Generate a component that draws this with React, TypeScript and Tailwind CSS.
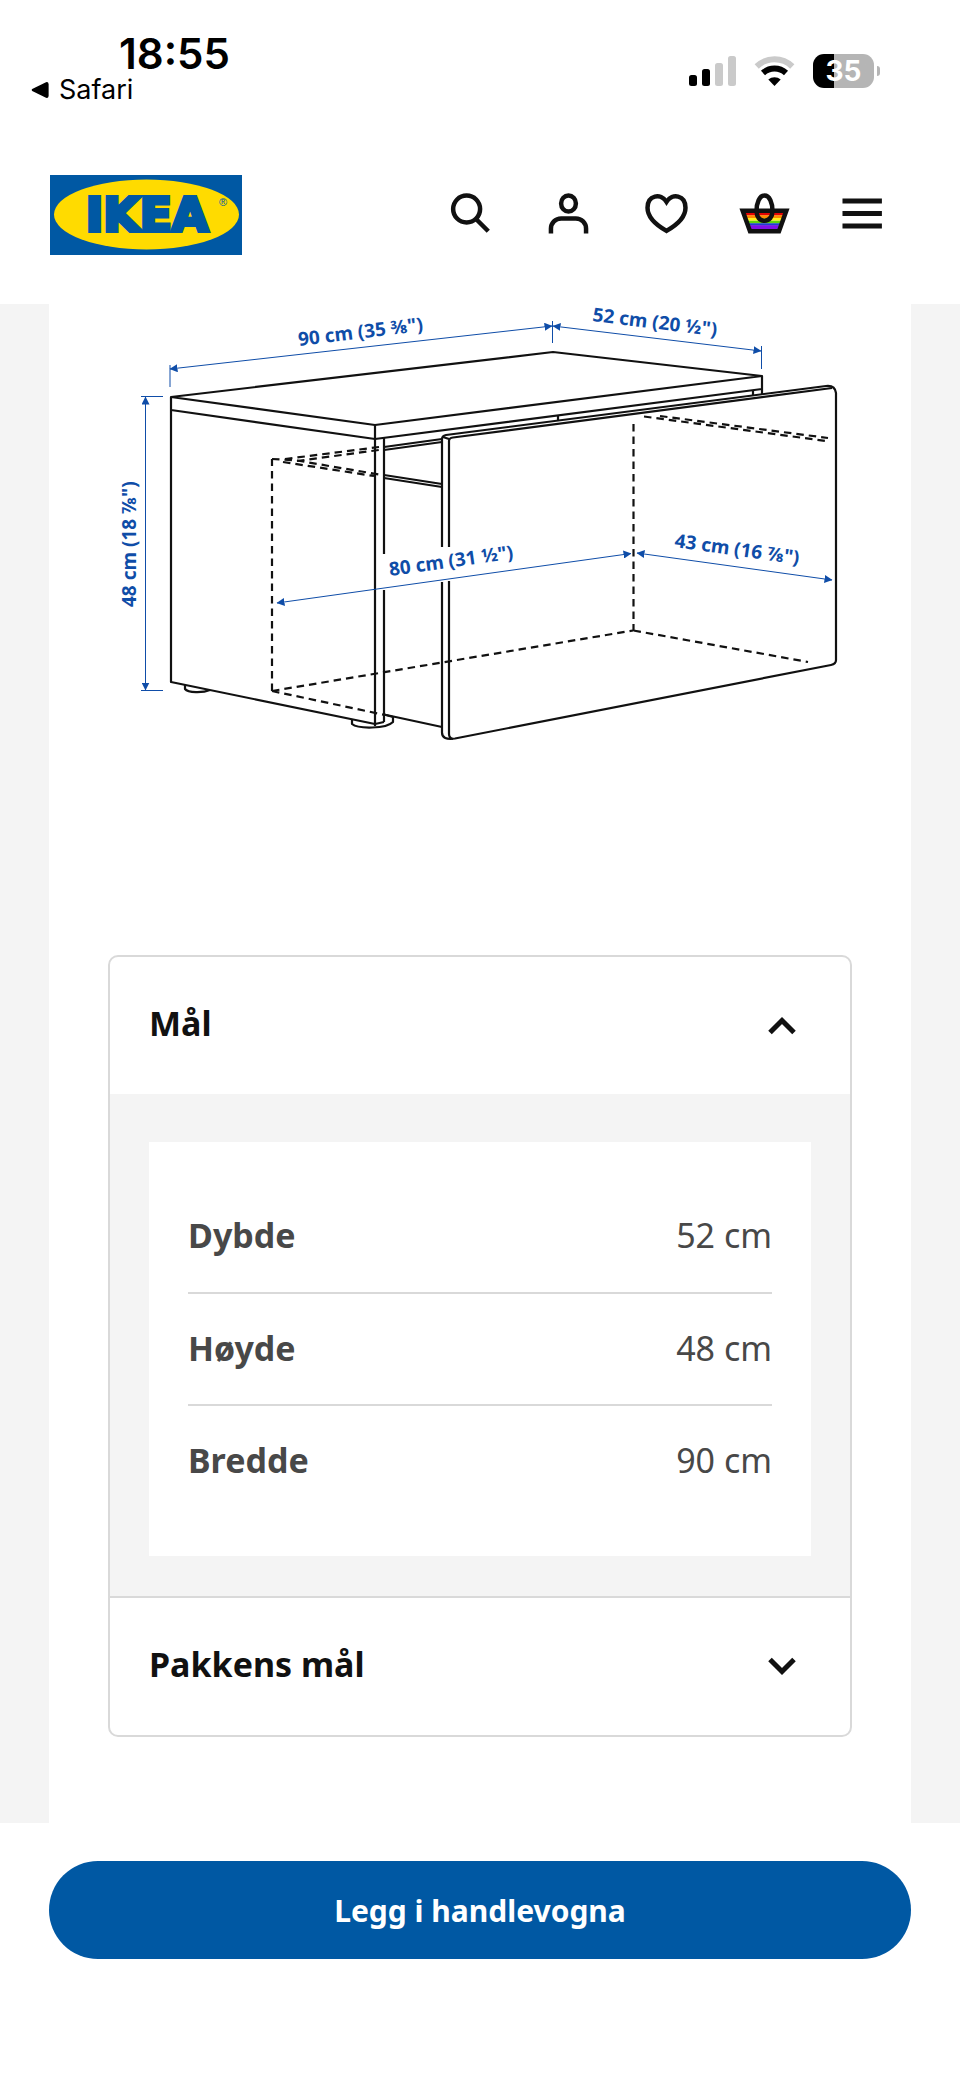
import { useState, type ReactNode } from 'react';

const INK = '#111111';
const BLUE = '#0f4da8';

const measurements = [
  { label: 'Dybde', value: '52 cm' },
  { label: 'Høyde', value: '48 cm' },
  { label: 'Bredde', value: '90 cm' },
];

function StatusBar() {
  return (
    <div className="flex h-[126px] items-start justify-between pl-[31px] pr-20 font-['Inter',sans-serif] text-black">
      <div className="pt-[34px]">
        <div className="pl-[88px] text-[42px] leading-10 font-semibold">18:55</div>
        <a href="#" className="flex items-center gap-2.5 text-[27px] leading-8">
          <svg className="h-[18px] w-[18px]" viewBox="0 0 18 18" aria-hidden="true">
            <path d="M1.2 8 15 1.2Q17.4 .6 17.6 3V15q-.2 2.4-2.6 1.8L1.2 10Q0 9 1.2 8z" />
          </svg>
          Safari
        </a>
      </div>
      <div className="flex items-center pt-[54px]">
        <svg className="mr-[18px] h-[34px] w-[47px]" viewBox="0 0 47 34" aria-label="Signal">
          <rect x="0" y="21" width="8" height="11" rx="2.5" />
          <rect x="13" y="15" width="8" height="17" rx="2.5" />
          <rect x="26" y="9" width="8" height="23" rx="2.5" fill="#cacaca" />
          <rect x="39" y="2" width="8" height="30" rx="2.5" fill="#cacaca" />
        </svg>
        <svg className="mr-[18px] h-[34px] w-[41px]" viewBox="0 0 41 34" fill="none" aria-label="Wi-Fi">
          <path d="M2.7 12.5a25.5 25.5 0 0 1 35.6 0" stroke="#cacaca" strokeWidth="6" />
          <path d="M9 19a17 17 0 0 1 23 0" stroke="#000" strokeWidth="6" />
          <path d="M14.3 25.5a9.5 9.5 0 0 1 12.4 0L20.5 32z" fill="#000" />
        </svg>
        <div className="flex items-center gap-[3px]">
          <div className="flex h-[34px] w-[61px] items-center justify-center rounded-[11px] bg-linear-to-r from-black from-35% to-[#b5b5b5] to-35% text-[28px] leading-none font-bold text-white">
            35
          </div>
          <div className="h-[10px] w-[3px] rounded-r-full bg-[#b5b5b5]" />
        </div>
      </div>
    </div>
  );
}

function Logo() {
  return (
    <svg className="block h-20 w-48" viewBox="0 0 192 80" aria-hidden="true">
      <rect width="192" height="80" fill="#0058a3" />
      <ellipse cx="96.500" cy="39.500" rx="92.500" ry="35" fill="#ffdb00" />
      <text
        x="97"
        y="56"
        textAnchor="middle"
        fontFamily="DejaVu Sans, sans-serif"
        fontSize="47"
        fontWeight="700"
        fill="#0058a3"
        stroke="#0058a3"
        strokeWidth="4"
      >
        IKEA
      </text>
      <text x="173" y="31" textAnchor="middle" fontFamily="Liberation Sans, sans-serif" fontSize="11" fill="#0058a3">
        ®
      </text>
    </svg>
  );
}

function NavIcon({ label, children }: { label: string; children: ReactNode }) {
  return (
    <button type="button" aria-label={label}>
      <svg className="block h-[49px] w-[49px] overflow-visible" viewBox="0 0 24 24" fill="none" stroke={INK} strokeWidth="2.200">
        {children}
      </svg>
    </button>
  );
}

function Header() {
  return (
    <header className="bg-white">
      <StatusBar />
      <nav className="flex h-[178px] items-center justify-between pl-[50px] pr-[73px]">
        <a href="#" aria-label="IKEA">
          <Logo />
        </a>
        <div className="flex items-center gap-[49px] pb-[3px]">
          <NavIcon label="Søk">
            <circle cx="10.100" cy="9.800" r="6.600" />
            <path d="m14.700 14.700 6 6" />
          </NavIcon>
          <NavIcon label="Profil">
            <rect x="8.400" y="3.200" width="7.200" height="7.800" rx="3.600" ry="3.800" />
            <path d="M3.400 21.800v-2.400a5 5 0 0 1 5-5h7.200a5 5 0 0 1 5 5v2.400" />
          </NavIcon>
          <NavIcon label="Favoritter">
            <path d="M12 6.300C9.200 1.800 2.700 3 2.700 9.200c0 5.100 5.200 9 9.300 11.300 4.100-2.300 9.300-6.200 9.300-11.300C21.300 3 14.800 1.800 12 6.300z" />
          </NavIcon>
          <NavIcon label="Handlevogn">
            <g stroke="none">
              <path d="M2.200 11.200h19.600v1.800H2.200z" fill="#e40303" />
              <path d="M3 12.800h18v1.500H3z" fill="#ff8c00" />
              <path d="M3.300 14.200h17.400v1.400H3.300z" fill="#fff01f" />
              <path d="M3.700 15.500h16.600v1.400H3.700z" fill="#5fd40b" />
              <path d="M4.100 16.800h15.800v1.200H4.100z" fill="#1f3fd0" />
              <path d="M4.400 17.800h15.200v2.200H4.400z" fill="#8010e8" />
            </g>
            <path d="M1.300 10.700h21.400l-3.600 10H4.900z" />
            <path d="M12 3.200c-2.500 0-3.900 3.600-3.900 7.500 0 3 1.500 4.800 3.900 4.800s3.900-1.800 3.900-4.800c0-3.900-1.400-7.500-3.900-7.500z" />
          </NavIcon>
          <NavIcon label="Meny">
            <path d="M2.200 5.900h19.300M2.200 12h19.300M2.200 18.100h19.300" strokeWidth="2.400" />
          </NavIcon>
        </div>
      </nav>
    </header>
  );
}

function DimensionLabel({ x, y, angle, children }: { x: number; y: number; angle: number; children: string }) {
  return (
    <text
      transform={`translate(${x} ${y}) rotate(${angle})`}
      fontFamily="Noto Sans, sans-serif"
      fontSize="19"
      fontWeight="700"
      fill={BLUE}
    >
      {children}
    </text>
  );
}

function ProductDrawing() {
  return (
    <svg className="block w-full overflow-visible" viewBox="49 304 862 496" fill="none" role="img" aria-label="Produktmål">
      <defs>
        <marker id="arrow" viewBox="0 0 8 8" refX="7.500" refY="4" markerWidth="8" markerHeight="8" markerUnits="userSpaceOnUse" orient="auto-start-reverse">
          <path d="M0 0 8 4 0 8z" fill={BLUE} />
        </marker>
      </defs>

      <g stroke={INK} strokeWidth="2.200" strokeLinejoin="round">
        {/* table top */}
        <path d="M171 397 553 352l209 24-387 49z" />
        <path d="M171 397v13l204 29 387-50v-13" />
        {/* frame */}
        <path d="M171 410v272l204 42 9-2" />
        <path d="M375 425v301M384 438v116M384 590v132" />
        <path d="M753 390v6M762 389v6M558 415v6" />
        {/* feet */}
        <path d="M185 685v4c3 4 18 4 25 1" />
        <path d="M352 720v4c6 5 34 5 41-2v-5l-9-2.500" />
        {/* drawer rails */}
        <path d="m384 447 58-8M384 450l58-8M384 475l58 9M384 478l58 9M384 714.500l58 12.500" />
        {/* drawer front */}
        <path d="M442 547V439q0-3 4-4l380-49q9-1 10 7v267q0 4-5 5L455 738.500q-13 2-13-6V582" />
        <path d="M449 547V441q0-3 4-3.500L832 388" />
        <path d="M449 581v153q0 4 4 5M443 437l6 2" />
      </g>

      <g stroke={INK} strokeWidth="2.200" strokeDasharray="7.500 5">
        <path d="M272 691V459M272 691l361-60.500M272 691l113 24" />
        <path d="M633.500 424v207M633.500 630.500 808 662" />
        <path d="m285 459 94-12M297 461l82-11" />
        <path d="m272 459 25 1.500 82 14M283 462l91 14" />
        <path d="m660 416 168 22M644 416.500 826 441" />
      </g>

      <g stroke={BLUE} strokeWidth="1">
        <path d="M170 365v22M552.500 321v22M761.500 346v23M141 396.500h22M141 690.500h22" />
        <path d="m170 369 382-43" markerStart="url(#arrow)" markerEnd="url(#arrow)" />
        <path d="m553 326 208 25" markerStart="url(#arrow)" markerEnd="url(#arrow)" />
        <path d="M145.500 397v293" markerStart="url(#arrow)" markerEnd="url(#arrow)" />
        <path d="m277 603 354-49.500" markerStart="url(#arrow)" markerEnd="url(#arrow)" />
        <path d="m637 553 195 27" markerStart="url(#arrow)" markerEnd="url(#arrow)" />
      </g>

      <DimensionLabel x={299} y={346} angle={-7}>90 cm (35 ⅜")</DimensionLabel>
      <DimensionLabel x={592} y={321} angle={7}>52 cm (20 ½")</DimensionLabel>
      <DimensionLabel x={390} y={576} angle={-8}>80 cm (31 ½")</DimensionLabel>
      <DimensionLabel x={674} y={547} angle={8}>43 cm (16 ⅞")</DimensionLabel>
      <DimensionLabel x={136} y={607} angle={-90}>48 cm (18 ⅞")</DimensionLabel>
    </svg>
  );
}

interface AccordionItemProps {
  title: string;
  open: boolean;
  onToggle: () => void;
  children?: ReactNode;
}

function AccordionItem({ title, open, onToggle, children }: AccordionItemProps) {
  return (
    <section className="border-b-2 border-[#d9d9d9] last:border-b-0">
      <h2>
        <button
          type="button"
          aria-expanded={open}
          onClick={onToggle}
          className="flex h-[137px] w-full items-center justify-between pl-[39px] pr-11 text-left text-[34px] font-bold text-[#111111]"
        >
          <span className="pb-1">{title}</span>
          <svg className="h-12 w-12" viewBox="0 0 48 48" fill="none" stroke={INK} strokeWidth="5" aria-hidden="true">
            <path d={open ? 'M12 30.500 24 18.500l12 12' : 'm12 16.500 12 12 12-12'} />
          </svg>
        </button>
      </h2>
      {open && children}
    </section>
  );
}

function MeasurementTable() {
  return (
    <div className="bg-[#f4f4f4] px-[39px] pt-12 pb-10">
      <div className="bg-white p-[39px]">
        <table className="w-full text-[34px] text-[#484848]">
          <tbody>
            {measurements.map((row) => (
              <tr key={row.label} className="h-28 border-b-2 border-[#d9d9d9] last:border-b-0">
                <th scope="row" className="pb-0.5 text-left font-bold">{row.label}</th>
                <td className="pb-0.5 text-right">{row.value}</td>
              </tr>
            ))}
          </tbody>
        </table>
      </div>
    </div>
  );
}

export default function App() {
  const [openItem, setOpenItem] = useState('size');
  const toggle = (id: string) => setOpenItem((current) => (current === id ? '' : id));

  return (
    <div className="min-h-screen bg-white font-['Noto_Sans',sans-serif]">
      <Header />
      <div className="bg-[#f4f4f4] px-[49px]">
        <main className="bg-white pb-[86px]">
          <ProductDrawing />
          <div className="mx-[59px] mt-[155px] overflow-hidden rounded-[10px] border-2 border-[#d9d9d9]">
            <AccordionItem title="Mål" open={openItem === 'size'} onToggle={() => toggle('size')}>
              <MeasurementTable />
            </AccordionItem>
            <AccordionItem title="Pakkens mål" open={openItem === 'package'} onToggle={() => toggle('package')} />
          </div>
        </main>
      </div>
      <footer className="bg-white px-[49px] pt-[38px] pb-[122px]">
        <button type="button" className="h-[98px] w-full rounded-full bg-[#0058a3] text-[30px] font-bold text-white">
          Legg i handlevogna
        </button>
      </footer>
    </div>
  );
}
